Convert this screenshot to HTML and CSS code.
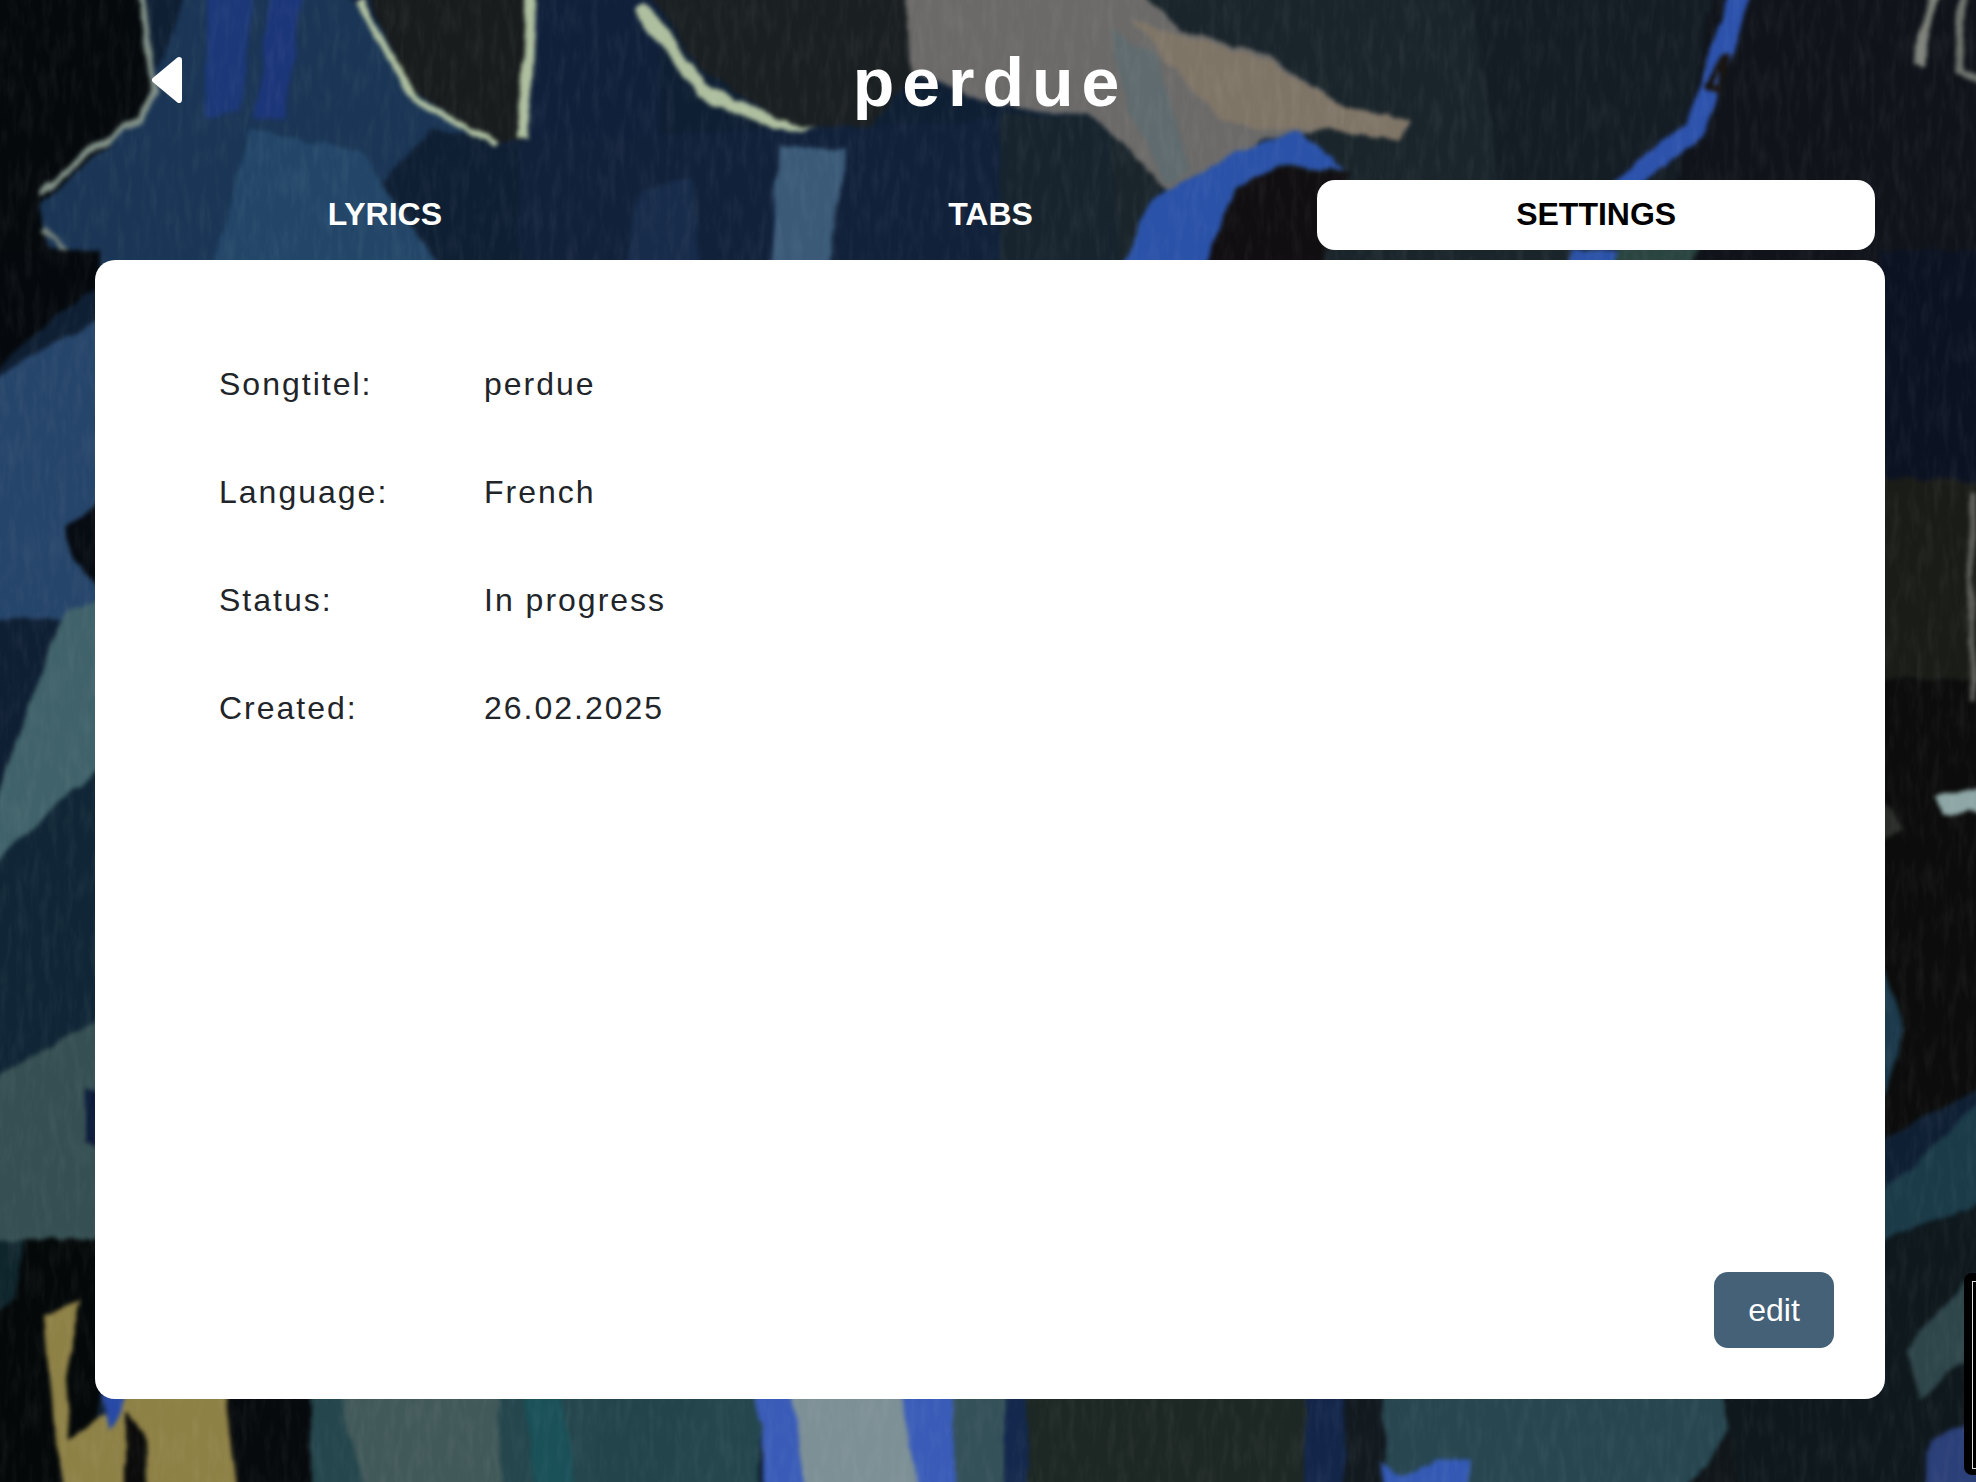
FILE: index.html
```html
<!DOCTYPE html>
<html>
<head>
  <meta charset="utf-8">
  <title>perdue</title>
  <link rel="stylesheet" href="styles.css">
</head>
<body>
  <!-- painting behind the page -->
  <svg class="painting" viewBox="0 0 1976 1482" preserveAspectRatio="none">
    <defs>
      <filter id="rough" filterUnits="userSpaceOnUse" x="-40" y="-40" width="2056" height="1562" color-interpolation-filters="sRGB">
        <feTurbulence type="fractalNoise" baseFrequency="0.05 0.02" numOctaves="3" seed="4" result="noise"/>
        <feDisplacementMap in="SourceGraphic" in2="noise" scale="10" xChannelSelector="R" yChannelSelector="G"/>
        <feGaussianBlur stdDeviation="2"/>
      </filter>
      <filter id="grain" filterUnits="userSpaceOnUse" x="0" y="0" width="1976" height="1482" color-interpolation-filters="sRGB">
        <feTurbulence type="fractalNoise" baseFrequency="0.12 0.03" numOctaves="3" seed="9"/>
        <feColorMatrix values="0 0 0 0 1  0 0 0 0 1  0 0 0 0 1  1.3 0 0 0 -0.55"/>
      </filter>
    </defs>
    <g filter="url(#rough)">
      <rect x="-40" y="-40" width="2056" height="1562" fill="#0f1f33"/>

      <!-- top left -->
      <path d="M190 -20H540V140L430 130L300 270H50L35 200L140 120Z" fill="#1a3555"/>
      <path d="M250 130L360 150L440 270H210Z" fill="#234668"/>
      <path d="M205 -20H255L240 110L205 120Z" fill="#1c3878"/>
      <path d="M270 -20H305L285 120L255 120Z" fill="#1c367a"/>
      <path d="M-40 -40H138L152 90L140 118L85 165L40 205L55 270H-40Z" fill="#05090c"/>
      <path d="M140 -20L155 90L142 118L88 152L40 195" stroke="#7f8f86" stroke-width="7" fill="none"/>
      <path d="M45 228L75 262L95 268" stroke="#6f7f7a" stroke-width="6" fill="none"/>

      <!-- dark shapes with cream lines -->
      <path d="M330 -20H660V140L495 145L420 60Z" fill="#10203a"/>
      <path d="M362 -20H530L520 142H496L410 90Z" fill="#181c1d"/>
      <path d="M640 -20H905L915 70L860 140L780 120L700 70Z" fill="#1a1f21"/>
      <path d="M360 0L415 100L496 143" stroke="#aebf9f" stroke-width="7" fill="none"/>
      <path d="M532 -20L527 80L520 140" stroke="#aebf9f" stroke-width="11" fill="none"/>
      <path d="M640 5L700 90L775 125L845 142" stroke="#aebf9f" stroke-width="13" fill="none"/>
      <path d="M520 140L780 130L1010 120V270H520Z" fill="#11213a"/>
      <path d="M780 145L845 150L830 270H770Z" fill="#3a5a78"/>
      <path d="M640 190L690 180L700 270H625Z" fill="#172c4a"/>

      <!-- right of title -->
      <path d="M1000 115H1120L1150 270H1000Z" fill="#17242e"/>
      <path d="M1100 -20H1760L1700 270H1120Z" fill="#1a252b"/>
      <path d="M1470 -20H1750L1700 200H1500Z" fill="#141c24"/>
      <path d="M1720 -40H2016V270H1660Z" fill="#10141a"/>

      <!-- brown patch -->
      <path d="M905 -40H1110L1180 30L1270 55L1340 105L1412 120L1400 140L1330 128L1260 140L1230 175L1190 205L1165 190L1130 150L1090 115L1025 110L980 100L910 70Z" fill="#6b6a69"/>
      <path d="M1130 20L1270 60L1340 105L1412 120L1400 140L1330 128L1270 130L1220 120Z" fill="#7f7567"/>
      <path d="M1110 30L1160 60L1190 170L1165 185L1130 110Z" fill="#5f6b6e"/>

      <!-- blue strokes -->
      <path d="M1190 270L1225 190L1280 168L1350 172L1320 270Z" fill="#100e10"/>
      <path d="M1120 270L1150 200L1240 150L1300 130L1345 170L1280 166L1235 190L1205 270Z" fill="#2a52a8"/>
      <path d="M1745 -20L1715 70L1695 130L1640 170L1620 190" stroke="#2c52ac" stroke-width="20" fill="none"/>
      <path d="M1725 55L1720 90L1708 85Z" stroke="#17130f" stroke-width="6" fill="none"/>
      <path d="M1570 250H1630L1620 270H1565Z" fill="#2a52a8"/>
      <path d="M1620 245H1700L1690 270H1610Z" fill="#2a4440"/>

      <!-- top right chalk -->
      <path d="M1938 -20L1918 65" stroke="#7d8179" stroke-width="10" fill="none"/>
      <path d="M1965 -20L1958 70L1996 85" stroke="#70746e" stroke-width="7" fill="none"/>

      <!-- left edge -->
      <path d="M-40 250H100V285L50 320L-40 400Z" fill="#05090d"/>
      <path d="M-40 395L60 340L100 320V620H-40Z" fill="#26456a"/>
      <path d="M65 530L100 500V590L75 560Z" fill="#070b12"/>
      <path d="M-40 900L20 730L65 610L100 600V770L60 800Z" fill="#40626a"/>
      <path d="M-40 900L60 800L100 770V1020L-40 1095Z" fill="#102636"/>
      <path d="M-40 1095L100 1020V1250H-40Z" fill="#354f52"/>
      <path d="M85 1090H100V1150L85 1140Z" fill="#0d1c3a"/>

      <!-- bottom left -->
      <path d="M-40 1240H100V1522H-40Z" fill="#040809"/>
      <path d="M-40 1240H25L15 1300L-40 1340Z" fill="#0f252c"/>
      <path d="M45 1315L80 1300L65 1380L70 1440L105 1415L125 1390H225L240 1522H70L55 1440Z" fill="#8e8146"/>
      <path d="M125 1410L148 1440L150 1522H125Z" fill="#0a0b0a"/>
      <path d="M100 1390H130L110 1430Z" fill="#284aa6"/>
      <path d="M225 1390H310V1522H240Z" fill="#070a0c"/>

      <!-- bottom strip -->
      <path d="M310 1390H760V1522H310Z" fill="#24464c"/>
      <path d="M340 1390H500V1522H370Z" fill="#42595a"/>
      <path d="M525 1390H560L580 1522H540Z" fill="#1a5058"/>
      <path d="M600 1390H700L650 1522H590Z" fill="#22444a"/>
      <path d="M755 1390H955V1522H770Z" fill="#3a5cb8"/>
      <path d="M790 1390H900L925 1522H810Z" fill="#7d9096"/>
      <path d="M955 1390H1005V1522H955Z" fill="#345058"/>
      <path d="M1005 1390H1028V1522H1005Z" fill="#13284c"/>
      <path d="M1028 1390H1305V1522H1028Z" fill="#1d2724"/>
      <path d="M1305 1390H1345V1522H1305Z" fill="#13264a"/>
      <path d="M1345 1390H1385V1522H1345Z" fill="#121a20"/>
      <path d="M1385 1390H1730V1522H1385Z" fill="#274650"/>
      <path d="M1380 1462L1405 1475L1440 1458L1470 1460L1465 1522H1395Z" fill="#3359b4"/>
      <path d="M1660 1522L1730 1430L1760 1395V1522Z" fill="#10161a"/>
      <path d="M1720 1390H1890V1522H1750Z" fill="#0f181c"/>

      <!-- right edge -->
      <path d="M1880 250H2016V500H1880Z" fill="#0b1222"/>
      <path d="M1880 480H2016V690H1880Z" fill="#1a1c18"/>
      <path d="M1880 680H2016V1070L1880 1140Z" fill="#0b0c0b"/>
      <path d="M1880 800L1905 830L1880 840Z" fill="#2b2d2b"/>
      <path d="M1880 950L1905 1030L1880 1110Z" fill="#1c3a4c"/>
      <path d="M1880 1195L2016 1070V1190L1880 1240Z" fill="#1b3b48"/>
      <path d="M1880 1240L2016 1190V1522H1880Z" fill="#0e181d"/>
      <path d="M1905 1350L1976 1270V1350L1920 1400Z" fill="#2e4549"/>
      <path d="M1930 1440L2016 1400V1522H1920Z" fill="#2b3f78"/>
      <path d="M1935 795L2016 786V810L1942 813Z" fill="#8ea6a6"/>
      <path d="M1971 490V700" stroke="#5f605c" stroke-width="6" fill="none"/>
    </g>
    <rect class="grain" width="1976" height="1482" filter="url(#grain)"/>
  </svg>

  <div class="resize-thumb"></div>

  <div class="page">
    <header class="header">
      <a class="back" href="#">
        <svg width="30" height="46" viewBox="0 0 30 46">
          <path d="M27 3L3 23L27 43Z" fill="#fff" stroke="#fff" stroke-width="6" stroke-linejoin="round"/>
        </svg>
      </a>
      <h1 class="title">perdue</h1>
    </header>

    <nav class="tabs">
      <div class="tab">LYRICS</div>
      <div class="tab">TABS</div>
      <div class="tab active">SETTINGS</div>
    </nav>

    <main class="card">
      <div class="rows">
        <div class="row"><span class="label">Songtitel:</span><span>perdue</span></div>
        <div class="row"><span class="label">Language:</span><span>French</span></div>
        <div class="row"><span class="label">Status:</span><span>In progress</span></div>
        <div class="row"><span class="label">Created:</span><span>26.02.2025</span></div>
      </div>
      <button class="edit">edit</button>
    </main>
  </div>
</body>
</html>
```
FILE: styles.css
```css
* {
  box-sizing: border-box;
}

html, body {
  margin: 0;
  height: 100%;
}

body {
  position: relative;
  overflow: hidden;
  background: #0f1f33;
  font-family: "Liberation Sans", Arial, sans-serif;
}

.painting {
  position: absolute;
  top: 0;
  left: 0;
  width: 100%;
  height: 100%;
}

.grain {
  opacity: 0.08;
}

.resize-thumb {
  position: absolute;
  top: 1273px;
  left: 1964px;
  width: 12px;
  height: 202px;
  padding: 8px 0 8px 8px;
  background: #000;
  border-radius: 8px 0 0 8px;
}

.resize-thumb::after {
  content: "";
  display: block;
  height: 100%;
  border: 1px solid #ddd;
  border-right: 0;
}

.page {
  position: relative;
  height: 100%;
  padding: 0 91px 83px 95px;
  display: flex;
  flex-direction: column;
}

.header {
  height: 180px;
  padding: 0 57px 17px;
  display: grid;
  grid-template-columns: 1fr auto 1fr;
  align-items: center;
}

.back {
  display: flex;
  margin-bottom: 4px;
}

.title {
  margin: 0;
  color: #fff;
  font-size: 68px;
  font-weight: 700;
  letter-spacing: 8px;
}

.tabs {
  display: grid;
  grid-template-columns: repeat(3, 1fr);
  gap: 48px;
  margin: 0 10px 10px 11px;
}

.tab {
  height: 70px;
  padding-bottom: 2px;
  display: flex;
  align-items: center;
  justify-content: center;
  border-radius: 18px;
  color: #fff;
  font-size: 32px;
  font-weight: 700;
}

.tab.active {
  background: #fff;
  color: #000;
}

.card {
  flex: 1;
  display: flex;
  flex-direction: column;
  padding: 100px 51px 51px 124px;
  background: #fff;
  border-radius: 20px;
}

.rows {
  display: flex;
  flex-direction: column;
  gap: 60px;
}

.row {
  display: flex;
  color: #212529;
  font-size: 32px;
  line-height: 48px;
  letter-spacing: 2px;
}

.label {
  width: 265px;
}

.edit {
  margin-top: auto;
  align-self: flex-end;
  width: 120px;
  height: 76px;
  padding: 0;
  border: 0;
  border-radius: 14px;
  background: #446178;
  color: #fff;
  font-family: inherit;
  font-size: 32px;
  cursor: pointer;
}
```
